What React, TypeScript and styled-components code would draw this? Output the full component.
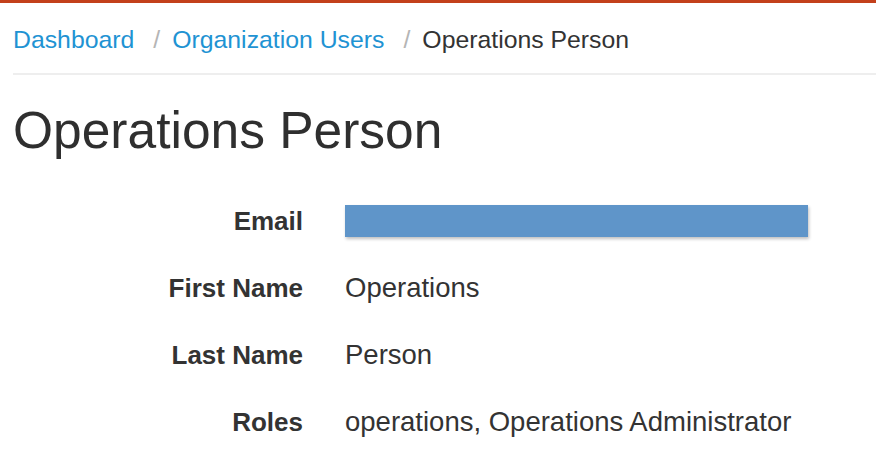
import React from "react";
import styled, { createGlobalStyle } from "styled-components";

const Global = createGlobalStyle`
  html, body { margin: 0; padding: 0; background: #fff; }
  body { font-family: "Liberation Sans", Arial, sans-serif; color: #333; }
`;

const TopBar = styled.div`
  height: 3px;
  background: #c3401b;
`;

const Page = styled.div`
  padding: 0 0 0 13px;
`;

const Breadcrumb = styled.nav`
  display: flex;
  align-items: center;
  margin-top: 20px;
  height: 34px;
  font-size: 24.8px;
  line-height: 34px;
`;

const Crumb = styled.a<{ $active?: boolean }>`
  color: ${(p) => (p.$active ? "#333" : "#1f93d3")};
  text-decoration: none;
`;

const Sep = styled.span`
  color: #b5b5b5;
  padding: 0 12px 0 19px;
`;

const Rule = styled.hr`
  margin: 16px 0 0 0;
  border: 0;
  height: 2px;
  background: #eeeeee;
`;

const Title = styled.h1`
  margin: 25px 0 0 0;
  font-size: 51.5px;
  line-height: 60px;
  font-weight: 400;
  color: #2f2f2f;
`;

const List = styled.dl`
  display: grid;
  grid-template-columns: 290px auto;
  column-gap: 42px;
  row-gap: 35px;
  margin: 45px 0 0 0;
`;

const Label = styled.dt`
  text-align: right;
  font-weight: 700;
  font-size: 26px;
  line-height: 32px;
  height: 32px;
  color: #333;
`;

const Value = styled.dd`
  margin: 0;
  font-size: 27.5px;
  line-height: 32px;
  height: 32px;
  color: #333;
`;

const Redacted = styled.div`
  width: 463px;
  height: 32px;
  background: #5f95c9;
  box-shadow: 1px 2px 3px rgba(0, 0, 0, 0.25);
`;

const rows: { label: string; value: string | null }[] = [
  { label: "Email", value: null },
  { label: "First Name", value: "Operations" },
  { label: "Last Name", value: "Person" },
  { label: "Roles", value: "operations, Operations Administrator" },
];

export default function App() {
  return (
    <>
      <Global />
      <TopBar />
      <Page>
        <Breadcrumb>
          <Crumb href="#">Dashboard</Crumb>
          <Sep>/</Sep>
          <Crumb href="#">Organization Users</Crumb>
          <Sep>/</Sep>
          <Crumb $active>Operations Person</Crumb>
        </Breadcrumb>
        <Rule />
        <Title>Operations Person</Title>
        <List>
          {rows.map((r) => (
            <React.Fragment key={r.label}>
              <Label>{r.label}</Label>
              <Value>{r.value === null ? <Redacted /> : r.value}</Value>
            </React.Fragment>
          ))}
        </List>
      </Page>
    </>
  );
}
